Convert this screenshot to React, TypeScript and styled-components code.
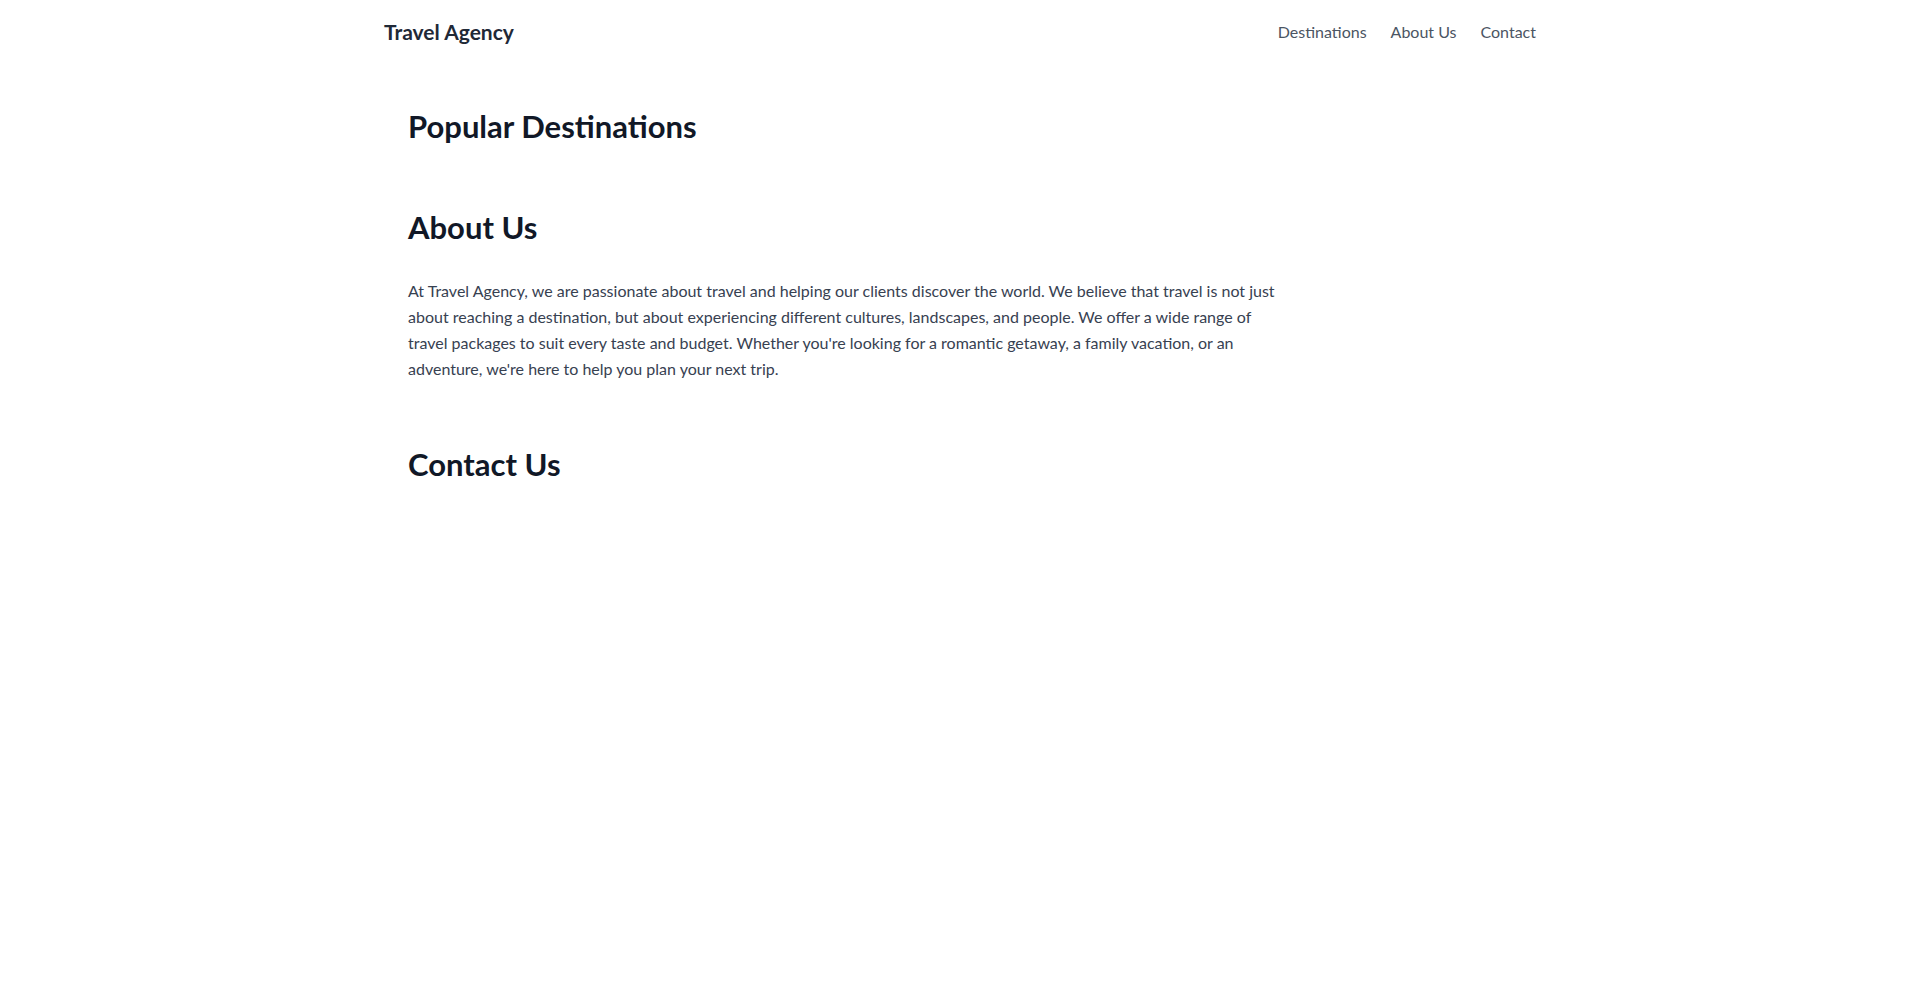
import React from "react";
import styled, { createGlobalStyle } from "styled-components";

const GlobalStyle = createGlobalStyle`
  *, *::before, *::after { box-sizing: border-box; }
  html, body { margin: 0; padding: 0; background: #ffffff; }
  body {
    font-family: Lato, "Open Sans", "Noto Sans", sans-serif;
    -webkit-font-smoothing: antialiased;
  }
`;

const Page = styled.div`
  min-height: 100vh;
  background: #ffffff;
`;

const Header = styled.header`
  background: #ffffff;
`;

const HeaderInner = styled.div`
  max-width: 1152px;
  margin: 0 auto;
  height: 64px;
  display: flex;
  align-items: center;
  justify-content: space-between;
`;

const Logo = styled.a`
  font-size: 21px;
  line-height: 28px;
  font-weight: 700;
  color: #1f2937;
  text-decoration: none;
`;

const Nav = styled.nav`
  display: flex;
  align-items: center;
  gap: 24px;
`;

const NavLink = styled.a`
  font-size: 16px;
  line-height: 24px;
  color: #4b5563;
  text-decoration: none;
`;

const Main = styled.main`
  max-width: 1152px;
  margin: 0 auto;
  padding-top: 12px;
`;

const Section = styled.section`
  padding: 32px 24px 0;
`;

const Heading = styled.h2`
  margin: 0 0 33px;
  font-size: 31px;
  line-height: 36px;
  font-weight: 700;
  color: #111827;
`;

const Grid = styled.div`
  display: grid;
  grid-template-columns: repeat(3, 1fr);
  gap: 24px;
`;

const Paragraph = styled.p`
  margin: 0 0 32px;
  max-width: 876px;
  font-size: 16px;
  line-height: 26px;
  color: #374151;
`;

export default function App() {
  return (
    <Page>
      <GlobalStyle />
      <Header>
        <HeaderInner>
          <Logo href="#">Travel Agency</Logo>
          <Nav>
            <NavLink href="#destinations">Destinations</NavLink>
            <NavLink href="#about">About Us</NavLink>
            <NavLink href="#contact">Contact</NavLink>
          </Nav>
        </HeaderInner>
      </Header>
      <Main>
        <Section id="destinations">
          <Heading>Popular Destinations</Heading>
          <Grid />
        </Section>
        <Section id="about">
          <Heading>About Us</Heading>
          <Paragraph>
            At Travel Agency, we are passionate about travel and helping our clients discover the
            world. We believe that travel is not just about reaching a destination, but about
            experiencing different cultures, landscapes, and people. We offer a wide range of travel
            packages to suit every taste and budget. Whether you're looking for a romantic getaway, a
            family vacation, or an adventure, we're here to help you plan your next trip.
          </Paragraph>
        </Section>
        <Section id="contact">
          <Heading>Contact Us</Heading>
        </Section>
      </Main>
    </Page>
  );
}
